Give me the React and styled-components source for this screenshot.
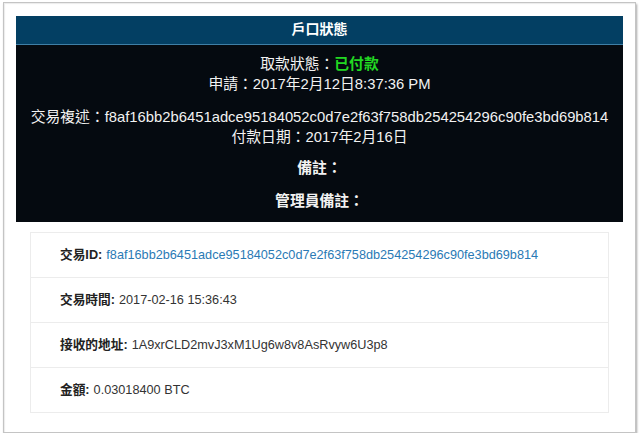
import React from 'react';
import styled, { createGlobalStyle } from 'styled-components';

const GlobalStyle = createGlobalStyle`
  html, body {
    margin: 0;
    padding: 0;
    background: #ffffff;
  }
  body {
    font-family: "Liberation Sans", "Noto Sans CJK TC", sans-serif;
  }
`;

const Frame = styled.div`
  box-sizing: border-box;
  margin: 2px 0 0 3px;
  width: 633px;
  height: 431px;
  border: 1px solid #c4c4c4;
  box-shadow: 1px 2px 2px rgba(0, 0, 0, 0.35), inset 1px 1px 1px rgba(0, 0, 0, 0.08);
  background: #fff;
  padding: 13px 12px 0 12px;
`;

const Header = styled.div`
  box-sizing: border-box;
  height: 29px;
  padding-bottom: 4px;
  background: #033f63;
  border-bottom: 1px solid #3f7fa6;
  color: #fff;
  font-size: 14px;
  font-weight: bold;
  display: flex;
  align-items: center;
  justify-content: center;
`;

const Panel = styled.div`
  background: #050a10;
  color: #f2f2f2;
  text-align: center;
  font-size: 14.8px;
  line-height: 20px;
  padding: 9px 0 11px;
`;

const Block = styled.div`
  margin-top: ${(p) => p.gap || 0}px;
  font-weight: ${(p) => (p.bold ? 'bold' : 'normal')};
`;

const Paid = styled.span`
  color: #22d822;
  font-weight: bold;
`;

const List = styled.ul`
  list-style: none;
  margin: 10px 14px 0;
  padding: 0;
  border: 1px solid #ececec;
  border-bottom: none;
`;

const Item = styled.li`
  box-sizing: border-box;
  height: 45px;
  padding: 0 29px;
  line-height: 44px;
  border-bottom: 1px solid #ececec;
  font-size: 12.7px;
  color: #333;
  white-space: nowrap;
`;

const Label = styled.b`
  margin-right: 4px;
  color: #222;
`;

const TxLink = styled.a`
  color: #2a7ab5;
  text-decoration: none;
`;

const rows = [
  { label: '交易ID:', value: 'f8af16bb2b6451adce95184052c0d7e2f63f758db254254296c90fe3bd69b814', link: true },
  { label: '交易時間:', value: '2017-02-16 15:36:43' },
  { label: '接收的地址:', value: '1A9xrCLD2mvJ3xM1Ug6w8v8AsRvyw6U3p8' },
  { label: '金額:', value: '0.03018400 BTC' },
];

export default function App() {
  return (
    <>
      <GlobalStyle />
      <Frame>
        <Header>戶口狀態</Header>
        <Panel>
          <Block>
            取款狀態：<Paid>已付款</Paid>
            <br />
            申請：2017年2月12日8:37:36 PM
          </Block>
          <Block gap={13}>
            交易複述：f8af16bb2b6451adce95184052c0d7e2f63f758db254254296c90fe3bd69b814
            <br />
            付款日期：2017年2月16日
          </Block>
          <Block gap={11} bold>備註：</Block>
          <Block gap={13} bold>管理員備註：</Block>
        </Panel>
        <List>
          {rows.map((r) => (
            <Item key={r.label}>
              <Label>{r.label}</Label>
              {r.link ? <TxLink href="#">{r.value}</TxLink> : r.value}
            </Item>
          ))}
        </List>
      </Frame>
    </>
  );
}
